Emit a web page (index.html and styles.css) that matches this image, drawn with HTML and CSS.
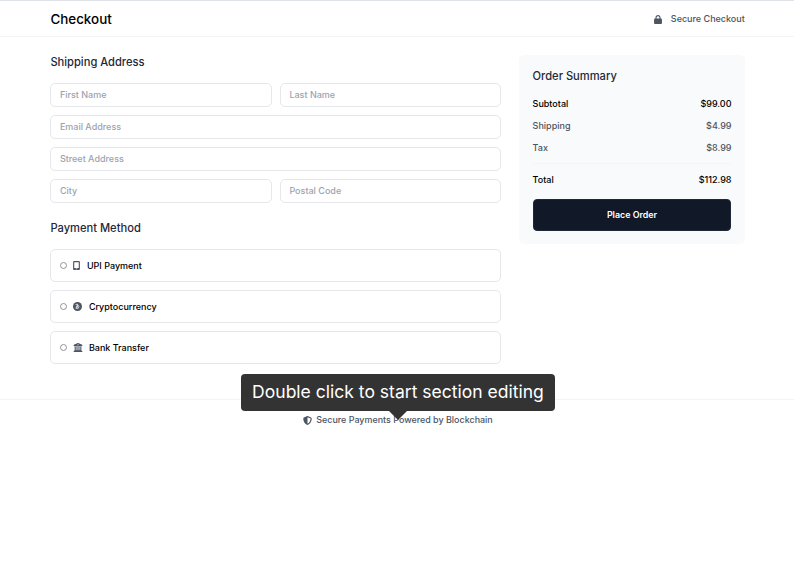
FILE: index.html
```html
<!DOCTYPE html>
<html lang="en">
<head>
<meta charset="utf-8">
<title>Checkout</title>
<link rel="stylesheet" href="styles.css">
</head>
<body>
<header class="header">
  <div class="container header-row">
    <h1 class="title">Checkout</h1>
    <div class="secure">
      <svg class="icon-lock" viewBox="0 0 448 512"><path d="M144 144v48h160v-48c0-44-36-80-80-80s-80 36-80 80zM80 192v-48C80 64 144 0 224 0s144 64 144 144v48h16c35 0 64 29 64 64v192c0 35-29 64-64 64H64c-35 0-64-29-64-64V256c0-35 29-64 64-64z"/></svg>
      <span>Secure Checkout</span>
    </div>
  </div>
</header>
<main class="container layout">
  <div class="forms">
    <section>
      <h2 class="heading">Shipping Address</h2>
      <form class="fields">
        <input class="field" placeholder="First Name">
        <input class="field" placeholder="Last Name">
        <input class="field wide" placeholder="Email Address">
        <input class="field wide" placeholder="Street Address">
        <input class="field" placeholder="City">
        <input class="field" placeholder="Postal Code">
      </form>
    </section>
    <section class="payment">
      <h2 class="heading">Payment Method</h2>
      <div class="methods">
        <label class="method">
          <input class="radio" type="radio" name="payment">
          <svg class="icon-phone" viewBox="0 0 384 512"><path fill-rule="evenodd" d="M0 64C0 29 29 0 64 0h256c35 0 64 29 64 64v384c0 35-29 64-64 64H64c-35 0-64-29-64-64zm64 0v336h256V64zm80 384c0 9 7 16 16 16h64c9 0 16-7 16-16s-7-16-16-16h-64c-9 0-16 7-16 16z"/></svg>
          <span>UPI Payment</span>
        </label>
        <label class="method">
          <input class="radio" type="radio" name="payment">
          <svg class="icon-square" viewBox="0 0 512 512"><circle cx="256" cy="256" r="256"/><path class="symbol" d="M155 170l38-65M180 150l145 55c55 30 20 90-35 80l-90-30M200 255l85 35c65 30 20 105-40 85l-105-40M275 105l-90 265"/></svg>
          <span>Cryptocurrency</span>
        </label>
        <label class="method">
          <input class="radio" type="radio" name="payment">
          <svg class="icon-bank" viewBox="0 0 512 512"><path fill-rule="evenodd" d="M243 4a32 32 0 0 1 26 0l224 96c14 6 22 21 18 36s-16 24-31 24v8c0 13-11 24-24 24H56c-13 0-24-11-24-24v-8c-15 0-28-10-31-24s4-30 18-36zM256 128a32 32 0 1 0 0-64 32 32 0 0 0 0 64zM64 224h64v192h40V224h64v192h48V224h64v192h40V224h64v196l50 34c12 8 17 22 13 35s-16 23-31 23H32c-14 0-27-9-31-23s1-27 13-35l50-34z"/></svg>
          <span>Bank Transfer</span>
        </label>
      </div>
    </section>
  </div>
  <aside class="summary">
    <h2 class="heading">Order Summary</h2>
    <div class="line strong"><span>Subtotal</span><span>$99.00</span></div>
    <div class="line"><span>Shipping</span><span>$4.99</span></div>
    <div class="line"><span>Tax</span><span>$8.99</span></div>
    <div class="line strong total"><span>Total</span><span>$112.98</span></div>
    <button class="order">Place Order</button>
  </aside>
</main>
<footer class="footer">
  <svg class="icon-shield" viewBox="0 0 512 512"><path fill-rule="evenodd" d="M256 0c5 0 9 1 13 3l189 80c22 9 38 31 38 57-1 99-42 280-214 363a57 57 0 0 1-52 0C58 420 17 239 16 140c0-26 16-48 38-57L243 3c4-2 8-3 13-3zm0 67v378c138-67 175-215 176-304z"/></svg>
  <span>Secure Payments Powered by Blockchain</span>
  <div class="tooltip">Double click to start section editing</div>
</footer>
</body>
</html>
```

FILE: styles.css
```css
* {
  box-sizing: border-box;
  margin: 0;
}

body {
  border-top: 1px solid #dee2e6;
  background: #fff;
  color: #000;
  font: 500 9px/14px Inter, "Liberation Sans", sans-serif;
}

svg {
  display: block;
  flex: none;
  fill: #4b5563;
}

.container {
  width: 694.4px;
  margin-left: 50.4px;
}

.header {
  height: 36px;
  border-bottom: 1px solid #f3f4f6;
}

.header-row {
  display: flex;
  align-items: center;
  justify-content: space-between;
  height: 36px;
}

.title {
  font-size: 13.4px;
  font-weight: 500;
  line-height: 20px;
}

.secure {
  display: flex;
  align-items: center;
  gap: 9px;
  color: #4b5563;
  font-size: 9px;
  font-weight: 450;
}

.icon-lock {
  width: 8px;
  height: 9px;
}

.layout {
  display: grid;
  grid-template-columns: 451px 226px;
  justify-content: space-between;
  align-items: start;
  padding-top: 18px;
}

.heading {
  color: #1f2937;
  font-size: 11.15px;
  font-weight: 450;
  line-height: 16px;
}

.forms .heading {
  margin-top: -1px;
  margin-bottom: 13px;
}

.fields {
  display: grid;
  grid-template-columns: 1fr 1fr;
  gap: 8px;
}

.field {
  width: 100%;
  height: 24px;
  padding: 0 8.5px 1px;
  border: 1px solid #e5e7eb;
  border-radius: 5px;
  background: #fff;
  font: inherit;
}

.field::placeholder {
  color: #9ca3af;
}

.wide {
  grid-column: span 2;
}

.payment {
  margin-top: 18px;
}

.methods {
  display: grid;
  gap: 8px;
}

.method {
  display: flex;
  align-items: center;
  height: 33px;
  padding: 0 8.5px;
  border: 1px solid #e5e7eb;
  border-radius: 5px;
}

.radio {
  appearance: none;
  width: 7px;
  height: 7px;
  margin-right: 6.5px;
  border: 1px solid #949494;
  border-radius: 50%;
}

.method svg {
  margin-right: 6.5px;
}

.icon-phone {
  width: 7px;
  height: 9px;
}

.icon-square {
  width: 9px;
  height: 9px;
}

.icon-bank {
  width: 10px;
  height: 9px;
  margin-left: -0.5px;
  margin-right: 6px !important;
}

.symbol {
  fill: none;
  stroke: #fff;
  stroke-width: 38px;
}

.summary {
  height: 189px;
  padding: 13px 13.3px 13px 13.8px;
  border-radius: 5px;
  background: #f9fafb;
}

.summary .heading {
  margin-bottom: 13px;
}

.line {
  display: flex;
  justify-content: space-between;
  margin-bottom: 8px;
  color: #4b5563;
}

.strong {
  color: #000;
}

.total {
  padding-top: 9px;
  border-top: 1px solid #f3f4f6;
}

.order {
  display: block;
  width: 100%;
  height: 32px;
  margin-top: 12px;
  border: 1px solid #1f2937;
  border-radius: 4px;
  background: #111827;
  color: #fff;
  font: inherit;
  font-size: 8.9px;
  font-weight: 600;
}

.footer {
  position: relative;
  display: flex;
  align-items: center;
  justify-content: center;
  gap: 4px;
  height: 41px;
  margin-top: 35px;
  padding-left: 2px;
  border-top: 1px solid #f3f4f6;
  color: #4b5563;
  font-size: 8.95px;
  font-weight: 450;
}

.icon-shield {
  width: 9px;
  height: 9px;
}

.tooltip {
  position: absolute;
  top: -26px;
  left: 241px;
  width: 314px;
  height: 37px;
  border-radius: 4px;
  background: #333;
  color: #fff;
  font-size: 17.55px;
  font-weight: 400;
  line-height: 36px;
  text-align: center;
  white-space: nowrap;
}

.tooltip::after {
  content: "";
  position: absolute;
  top: 37px;
  left: 148px;
  border: 9px solid transparent;
  border-top-color: #333;
  border-bottom: 0;
}
```
